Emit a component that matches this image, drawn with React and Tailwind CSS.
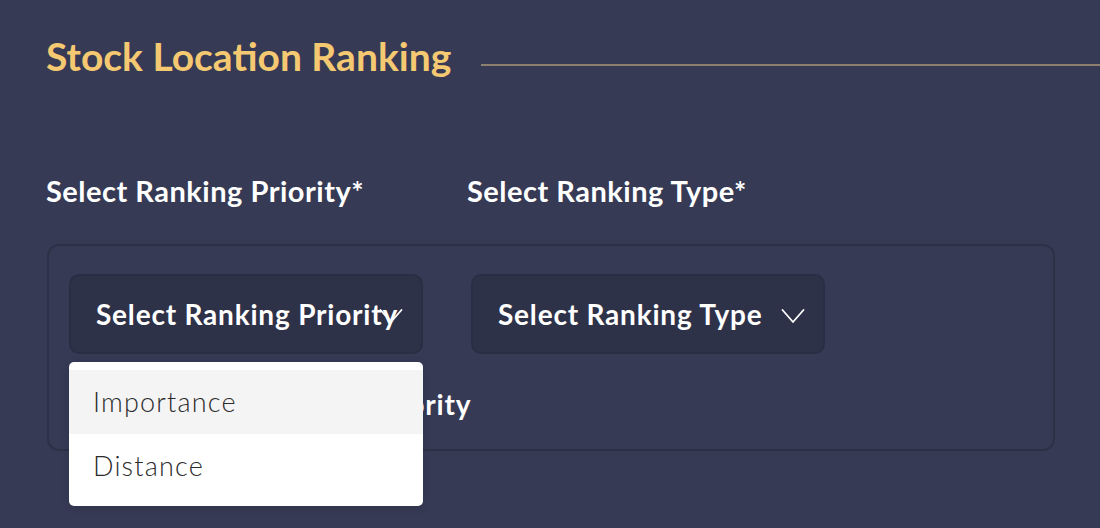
import React from 'react';

function Chevron() {
  return (
    <svg width="24" height="16" viewBox="0 0 24 16" fill="none" stroke="currentColor" strokeWidth="1.8" strokeLinecap="round" strokeLinejoin="round">
      <path d="M1.5 2 L12 14 L22.5 2" />
    </svg>
  );
}

function SelectButton({ label }) {
  return (
    <div className="relative flex items-center w-[354px] h-[80px] rounded-[10px] bg-[#2e3249] border-2 border-[#2a2e44] pl-[25px] overflow-visible">
      <span className="text-[28px] font-bold text-white tracking-[0.8px] whitespace-nowrap">{label}</span>
      <span className="absolute right-[18px] top-[32px] text-white">
        <Chevron />
      </span>
    </div>
  );
}

export default function App() {
  return (
    <div className="min-h-screen w-full bg-[#363a55] font-['Lato',sans-serif] overflow-hidden">
      <div className="flex items-center pl-[46px] pt-[32px]">
        <h1 className="text-[39px] font-bold text-[#f5c872] leading-[48px] whitespace-nowrap">Stock Location Ranking</h1>
        <div className="ml-[30px] flex-1 h-[2px] bg-[#8c7f6b] mt-[18px]"></div>
      </div>

      <div className="flex pl-[46px] mt-[94px]">
        <div className="w-[421px] text-[29px] font-bold text-white leading-[34px] tracking-[0.5px]">Select Ranking Priority*</div>
        <div className="text-[29px] font-bold text-white leading-[34px] tracking-[0.5px]">Select Ranking Type*</div>
      </div>

      <div className="ml-[47px] mr-[45px] mt-[36px] h-[207px] rounded-[12px] border-2 border-[#2d3147] pl-[20px] pt-[28px]">
        <div className="flex gap-[48px]">
          <div className="relative">
            <SelectButton label="Select Ranking Priority" />
            <div className="absolute left-0 top-[88px] z-10 w-[354px] bg-white rounded-[5px] py-[8px] shadow-[0_2px_8px_rgba(0,0,0,0.15)]">
              <div className="h-[64px] flex items-center pl-[24px] bg-[#f4f4f4] text-[27px] font-light text-[#2b2b2b] tracking-[1.2px]">Importance</div>
              <div className="h-[64px] flex items-center pl-[24px] text-[27px] font-light text-[#2b2b2b] tracking-[1.2px]">Distance</div>
            </div>
          </div>
          <SelectButton label="Select Ranking Type" />
        </div>
        <div className="mt-[29px] text-[28px] font-bold text-white whitespace-nowrap pl-[80px] tracking-[0.8px]">Current Ranking Priority</div>
      </div>
    </div>
  );
}
